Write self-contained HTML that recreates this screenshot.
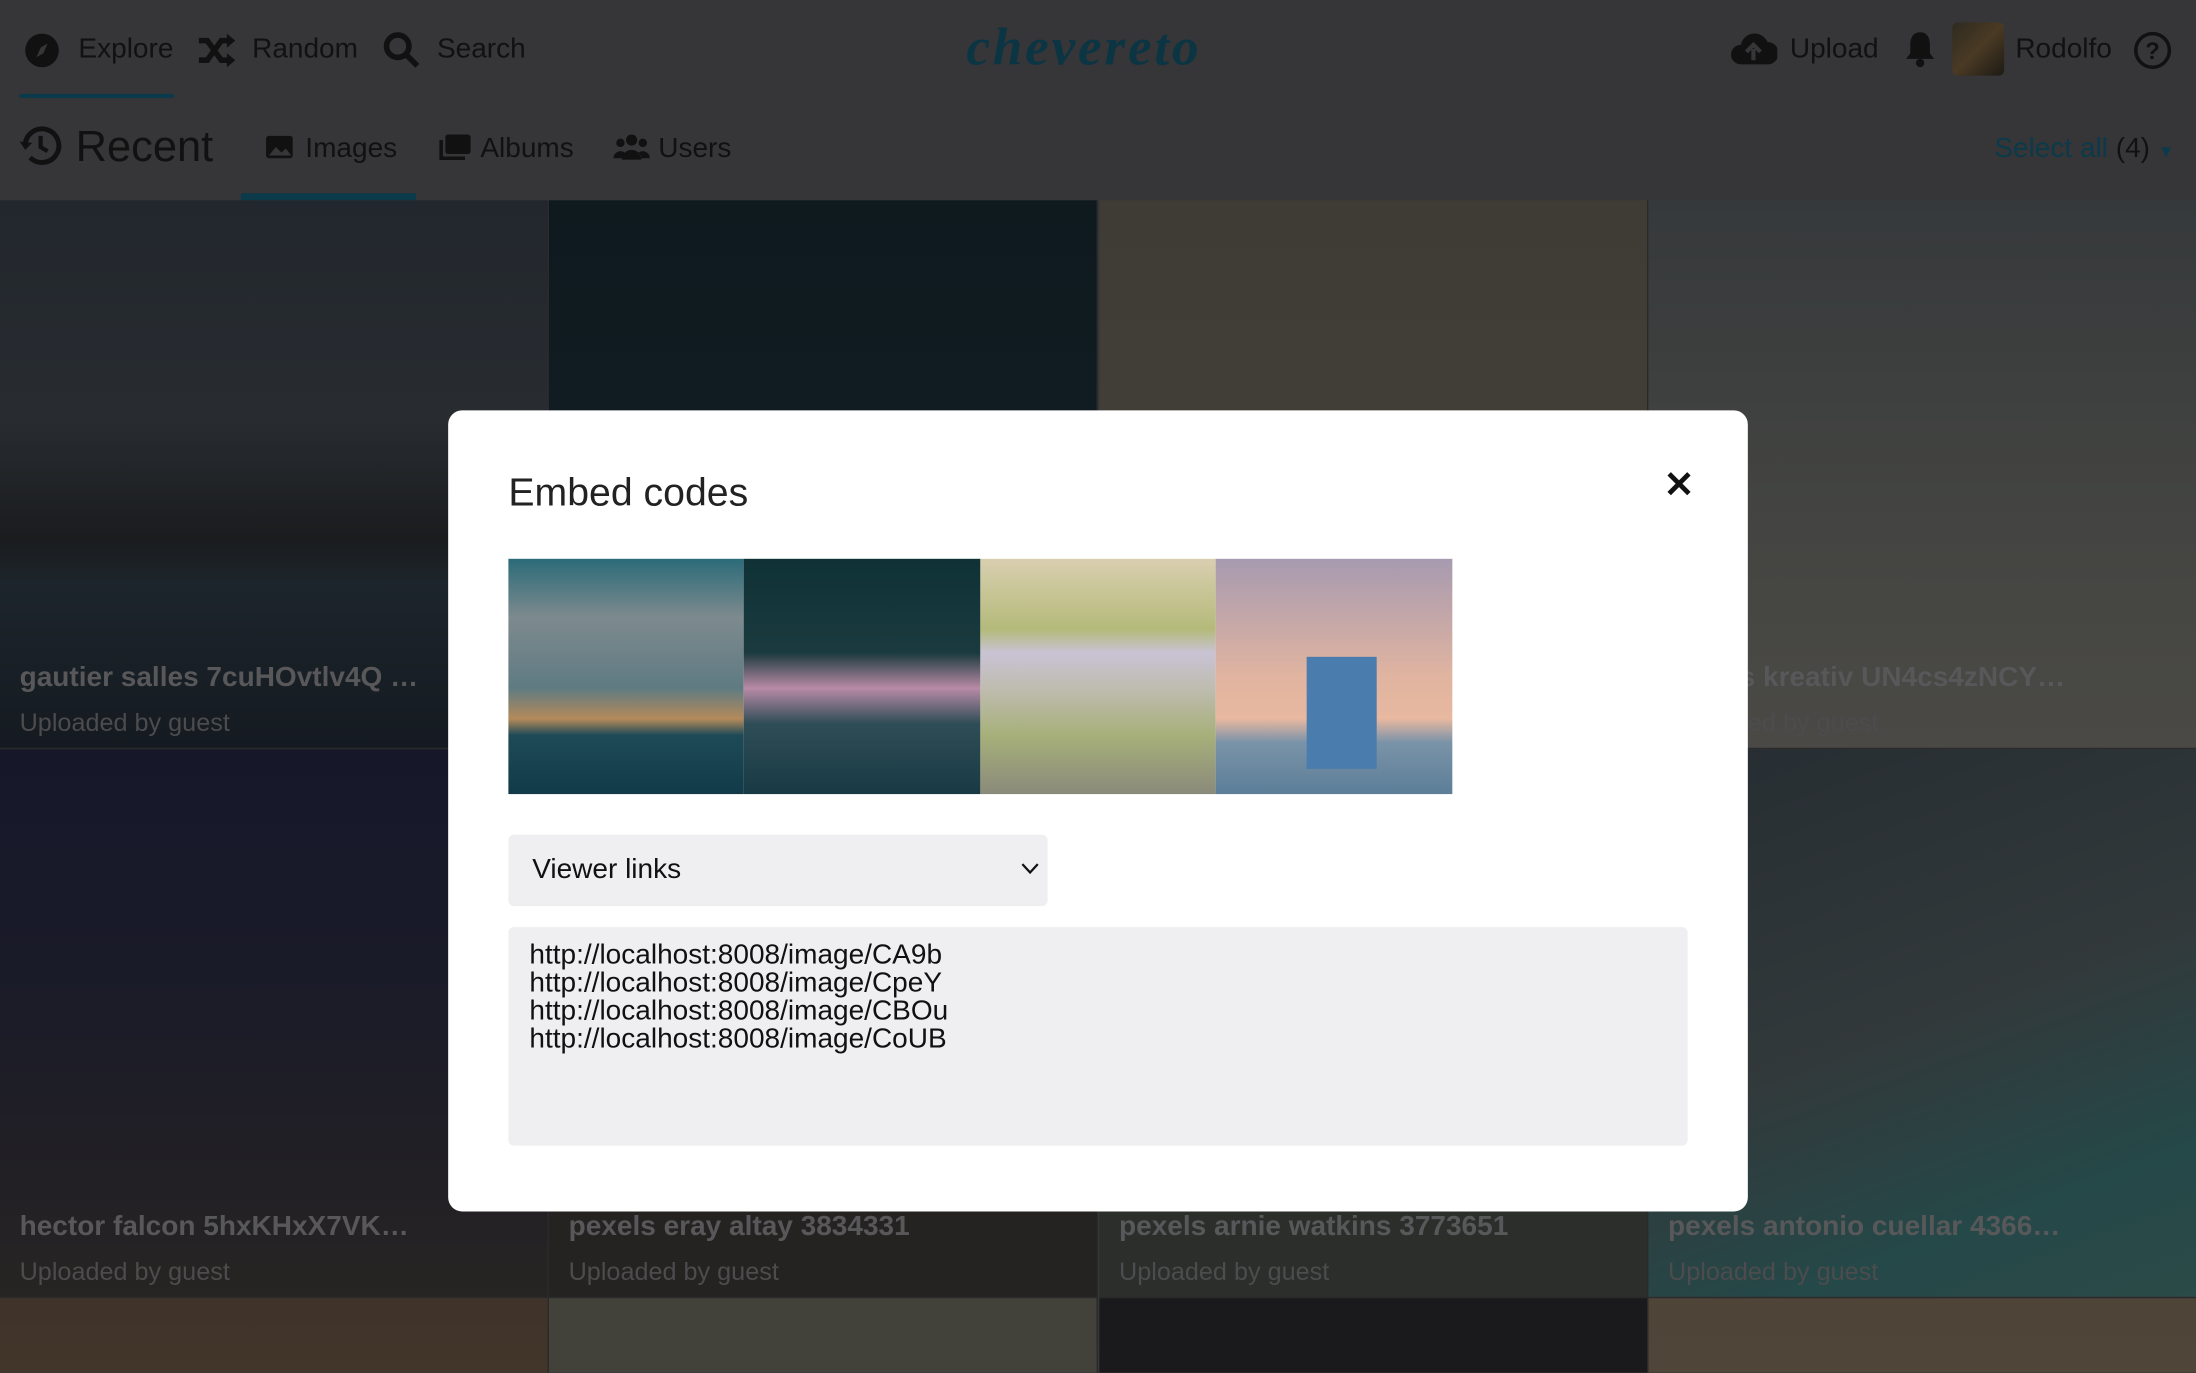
<!DOCTYPE html>
<html><head><meta charset="utf-8"><style>
*{box-sizing:border-box;margin:0;padding:0}
html,body{width:2196px;height:1373px;overflow:hidden;background:#363538;font-family:"Liberation Sans",Arial,sans-serif}
#s{position:absolute;left:0;top:0;width:1568px;height:980px;transform:scale(1.40051);transform-origin:0 0;background:#363538;overflow:hidden}
.a{position:absolute}
.nav{color:#111;font-size:20px}
.tile{position:absolute;width:392px;height:392px;overflow:hidden;border-right:1px solid #2a2a2a;border-bottom:1px solid #2a2a2a}
.tt{position:absolute;left:14px;bottom:38px;font-weight:bold;font-size:20px;color:#58585a;white-space:nowrap}
.ts{position:absolute;left:14px;bottom:7px;font-size:18px;color:#4c4c4e}
.ico{position:absolute;top:12px}
</style></head><body><div id="s">
<svg class="a" style="left:17px;top:23px" width="26" height="26" viewBox="0 0 26 26"><circle cx="13" cy="13" r="12" fill="#111"/><path d="M17 8l-3 7-5 3 3-7z" fill="#363538"/></svg>
<div class="a nav" style="left:56px;top:24px">Explore</div>
<svg class="a" style="left:140px;top:24px" width="28" height="24" viewBox="0 0 28 24"><path d="M2 5h6l10 14h6M2 19h6l10-14h6" stroke="#111" stroke-width="4" fill="none"/><path d="M22 0l6 5-6 5zM22 14l6 5-6 5z" fill="#111"/></svg>
<div class="a nav" style="left:180px;top:24px">Random</div>
<svg class="a" style="left:273px;top:22px" width="28" height="28" viewBox="0 0 28 28"><circle cx="11" cy="11" r="8" stroke="#111" stroke-width="4" fill="none"/><path d="M17 17l8 8" stroke="#111" stroke-width="4"/></svg>
<div class="a nav" style="left:312px;top:24px">Search</div>
<div class="a" style="left:14px;top:67px;width:110px;height:3px;background:#0b3a4a"></div>
<div class="a" style="left:690px;top:12px;font-family:'Liberation Serif',serif;font-style:italic;font-weight:bold;font-size:38px;color:#0c3544;letter-spacing:2px">chevereto</div>
<svg class="a" style="left:1235px;top:22px" width="34" height="26" viewBox="0 0 34 26"><path d="M8 24a7 7 0 010-14 10 10 0 0119-2 8 8 0 010 16z" fill="#111"/><path d="M17 21v-8M12 15l5-5 5 5" stroke="#363538" stroke-width="3" fill="none"/></svg>
<div class="a nav" style="left:1278px;top:24px">Upload</div>
<svg class="a" style="left:1358px;top:21px" width="26" height="28" viewBox="0 0 26 28"><path d="M13 2c-5 0-7 4-7 9v6l-3 4h20l-3-4v-6c0-5-2-9-7-9z" fill="#111"/><circle cx="13" cy="24" r="3" fill="#111"/></svg>
<div class="a" style="left:1394px;top:16px;width:37px;height:38px;border-radius:4px;background:linear-gradient(135deg,#2e2a20,#4a3a24 50%,#1d1a14)"></div>
<div class="a nav" style="left:1439px;top:24px">Rodolfo</div>
<svg class="a" style="left:1523px;top:22px" width="28" height="28" viewBox="0 0 28 28"><circle cx="14" cy="14" r="12" stroke="#111" stroke-width="2.5" fill="none"/><text x="14" y="20" font-size="17" font-family="Liberation Sans" font-weight="bold" text-anchor="middle" fill="#111">?</text></svg>
<svg class="a" style="left:12px;top:87px" width="34" height="34" viewBox="0 0 34 34"><path d="M6 17a12 12 0 1 1 3.5 8.5" stroke="#111" stroke-width="3.5" fill="none"/><path d="M2 14l4 6 5-5z" fill="#111"/><path d="M17 10v8l5 3" stroke="#111" stroke-width="3" fill="none"/></svg>
<div class="a" style="left:54px;top:87px;font-size:31px;color:#111">Recent</div>
<svg class="a" style="left:189px;top:96px" width="21" height="18" viewBox="0 0 21 18"><rect x="1" y="1" width="19" height="16" rx="2" fill="#111"/><path d="M3 15l5-6 4 4 3-3 4 5z" fill="#363538"/></svg>
<div class="a nav" style="left:218px;top:95px">Images</div>
<div class="a" style="left:172px;top:138px;width:125px;height:5px;background:#0b3a4a"></div>
<svg class="a" style="left:313px;top:95px" width="24" height="20" viewBox="0 0 24 20"><rect x="5" y="1" width="18" height="14" rx="2" fill="#111"/><path d="M2 5v13h17" stroke="#111" stroke-width="2.5" fill="none"/></svg>
<div class="a nav" style="left:343px;top:95px">Albums</div>
<svg class="a" style="left:438px;top:95px" width="26" height="20" viewBox="0 0 26 20"><circle cx="13" cy="5" r="4" fill="#111"/><circle cx="5" cy="7" r="3" fill="#111"/><circle cx="21" cy="7" r="3" fill="#111"/><path d="M6 19a7 7 0 0114 0zM0 18a5 5 0 018-4l-2 4zM26 18a5 5 0 00-8-4l2 4z" fill="#111"/></svg>
<div class="a nav" style="left:470px;top:95px">Users</div>
<div class="a" style="left:1424px;top:95px;font-size:20px;color:#0b3a4a">Select all <span style="color:#111">(4)</span> <span style="font-size:12px">▼</span></div>
<div class="tile" style="left:0;top:143px;background:linear-gradient(#22272d 0%,#282c31 40%,#1a1c1e 62%,#1d252c 70%,#141a20)"><div class="tt">gautier salles 7cuHOvtlv4Q …</div><div class="ts">Uploaded by guest</div></div>
<div class="tile" style="left:392px;top:143px;background:linear-gradient(#0f1a1f,#121f25)"></div>
<div class="tile" style="left:785px;top:143px;background:linear-gradient(#3e3c35,#45423a)"></div>
<div class="tile" style="left:1177px;top:143px;background:linear-gradient(#36393b,#444542 60%,#4a4945)"><div class="tt">pexels kreativ UN4cs4zNCY…</div><div class="ts">Uploaded by guest</div></div>
<div class="tile" style="left:0;top:535px;background:linear-gradient(#16182a,#1a1b29 40%,#222024 80%,#272523)"><div class="tt">hector falcon 5hxKHxX7VK…</div><div class="ts">Uploaded by guest</div></div>
<div class="tile" style="left:392px;top:535px;background:#242321"><div class="tt">pexels eray altay 3834331</div><div class="ts">Uploaded by guest</div></div>
<div class="tile" style="left:785px;top:535px;background:#2b2e2b"><div class="tt">pexels arnie watkins 3773651</div><div class="ts">Uploaded by guest</div></div>
<div class="tile" style="left:1177px;top:535px;background:linear-gradient(160deg,#262d32,#32393b 50%,#254848 80%,#2b4a48)"><div class="tt">pexels antonio cuellar 4366…</div><div class="ts">Uploaded by guest</div></div>
<div class="tile" style="left:0;top:927px;background:linear-gradient(#40342a,#4c3c2c)"></div>
<div class="tile" style="left:392px;top:927px;background:linear-gradient(#42413a,#4a4838)"></div>
<div class="tile" style="left:785px;top:927px;background:#1a1a1c"></div>
<div class="tile" style="left:1177px;top:927px;background:linear-gradient(#4e4438,#584c3e)"></div>
<div class="a" style="left:320px;top:293px;width:928px;height:572px;background:#fff;border-radius:10px"></div>
<div class="a" style="left:363px;top:336px;font-size:28px;color:#222">Embed codes</div>
<div class="a" style="left:1188px;top:331px;font-size:26px;font-weight:bold;color:#111">✕</div>
<div class="a" style="left:363px;top:399px;width:168px;height:168px;background:linear-gradient(#2b6b78 0%,#7d8a8e 25%,#5f7b82 55%,#b48a5a 68%,#1e4a58 75%,#123a48)"></div>
<div class="a" style="left:531px;top:399px;width:169px;height:168px;background:linear-gradient(#0f3236 0%,#1a3a3e 40%,#b88aa6 55%,#2f4d56 70%,#183a44)"></div>
<div class="a" style="left:700px;top:399px;width:168px;height:168px;background:linear-gradient(#d9cfb0 0%,#b4ba7a 30%,#c9c3d5 40%,#bfbcb0 55%,#a7b07a 75%,#8a8a7a)"></div>
<div class="a" style="left:868px;top:399px;width:169px;height:168px;background:linear-gradient(#a79ab0 0%,#e0b4a0 50%,#e8b8a0 68%,#7a93a8 78%,#5c7e98)"><div class="a" style="left:65px;top:70px;width:50px;height:80px;background:#4b7cae"></div></div>
<div class="a" style="left:363px;top:596px;width:385px;height:51px;background:#efeef0;border-radius:4px"></div>
<div class="a" style="left:380px;top:610px;font-size:20px;color:#111">Viewer links</div>
<svg class="a" style="left:729px;top:616px" width="13" height="9" viewBox="0 0 13 9"><path d="M1 1l5.5 6L12 1" stroke="#111" stroke-width="1.6" fill="none"/></svg>
<div class="a" style="left:363px;top:662px;width:842px;height:156px;background:#efeef0;border-radius:4px"></div>
<div class="a" style="left:378px;top:672px;font-size:20px;line-height:20px;color:#111">http://localhost:8008/image/CA9b<br>http://localhost:8008/image/CpeY<br>http://localhost:8008/image/CBOu<br>http://localhost:8008/image/CoUB</div>
</div></body></html>
